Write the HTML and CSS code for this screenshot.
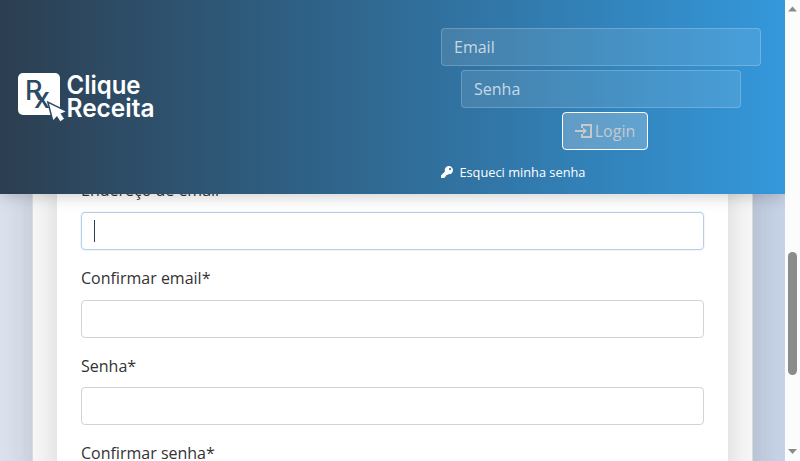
FILE: index.html
```html
<!DOCTYPE html>
<html lang="pt-BR">
<head>
<meta charset="utf-8">
<title>Clique Receita</title>
<link rel="stylesheet" href="styles.css">
</head>
<body>
<div class="app">
  <div class="page">
    <header class="header">
      <a class="brand" aria-label="Clique Receita">
        <svg width="144" height="56" viewBox="0 0 144 56">
          <rect x="2" y="5" width="42" height="42" rx="5" fill="#fff"/>
          <g class="rx"><text x="9" y="32" font-size="27" textLength="17.5" lengthAdjust="spacingAndGlyphs">R</text><text x="18" y="40" font-size="29" textLength="16" lengthAdjust="spacingAndGlyphs">x</text></g>
          <path d="M33 35.5L37.3 52L41 48L44.3 53.2L48 50.8L44.5 45.5L49.5 43.5Z" fill="#fff" stroke="#2c4a63" stroke-width="3" paint-order="stroke"/>
          <g class="name"><text x="50.5" y="26" textLength="74" lengthAdjust="spacingAndGlyphs">Clique</text><text x="50.5" y="48.5" textLength="88" lengthAdjust="spacingAndGlyphs">Receita</text></g>
        </svg>
      </a>
      <form class="login">
        <input class="field email" placeholder="Email">
        <input class="field password" type="password" placeholder="Senha">
        <button class="submit" type="button">
          <svg width="18" height="16" viewBox="0 0 18 16" fill="none" stroke="currentColor" stroke-width="2"><path d="M7 5V2H16V14H7V11"/><path d="M0 8H10"/><path d="M8 4.5L12 8L8 11.5Z" fill="currentColor" stroke="none"/></svg><span>Login</span>
        </button>
        <a class="forgot">
          <svg width="12" height="12" viewBox="0 0 512 512" fill="currentColor"><path d="M512 176c0 97-79 176-176 176-11 0-22-1-33-3l-24 27c-5 5-11 8-18 8h-37v40c0 13-11 24-24 24h-40v40c0 13-11 24-24 24H24c-13 0-24-11-24-24v-78c0-6 3-12 7-17l162-161C163 214 160 195 160 176 160 79 239 0 336 0s176 79 176 176zM336 128a48 48 0 1 0 96 0 48 48 0 1 0-96 0z"/></svg><span>Esqueci minha senha</span>
        </a>
      </form>
    </header>
    <main class="outer">
      <section class="card">
        <div class="group"><label>Endereço de email*</label><div class="control focused"><span class="caret"></span></div></div>
        <div class="group"><label>Confirmar email*</label><div class="control"></div></div>
        <div class="group"><label>Senha*</label><div class="control"></div></div>
        <div class="group"><label>Confirmar senha*</label><div class="control"></div></div>
      </section>
    </main>
  </div>
  <div class="scrollbar">
    <svg width="10" height="6" viewBox="0 0 10 6"><path d="M0 5.5L4.5 0.5L9 5.5Z"/></svg>
    <div class="thumb"></div>
    <svg class="down" width="10" height="6" viewBox="0 0 10 6"><path d="M0 0H9L4.5 5Z"/></svg>
  </div>
</div>
</body>
</html>
```
FILE: styles.css
```css
* { box-sizing: border-box; }
body { margin: 0; overflow: hidden; font: 16px/25.5px "Open Sans", sans-serif; color: #333; }
.app { display: flex; width: 800px; height: 461px; overflow: hidden; }
.page { position: relative; width: 785px; height: 461px; overflow: hidden; background: linear-gradient(90deg, #dae1ed, #c6d2e5); }
.header { position: absolute; inset: 0 0 auto; z-index: 2; height: 194px; display: flex; justify-content: space-between; align-items: center; padding: 0 24px 0 16px; background: linear-gradient(90deg, #2c3e50, #3498db); box-shadow: 0 2px 15px rgba(0, 0, 0, .2); }
.brand { display: block; height: 56px; margin-top: -2px; }
.brand svg { display: block; }
.rx { font-family: Inter, sans-serif; font-weight: 500; fill: #2c4a63; }
.name { font: 600 25px Inter, sans-serif; fill: #fff; }
.login { width: 320px; height: 194px; padding-top: 28px; display: flex; flex-direction: column; align-items: center; gap: 4px; }
.field { width: 320px; height: 38px; padding: 0 12px; border: 1px solid rgba(255, 255, 255, .2); border-radius: 4px; background: rgba(255, 255, 255, .1); font: inherit; color: #fff; outline: 0; }
.field::placeholder { color: rgba(255, 255, 255, .7); opacity: 1; }
.password { width: 280px; }
.submit { width: 86px; height: 38px; margin-left: 8px; padding: 1px 0 0; border: 1px solid #fff; border-radius: 4px; background: rgba(255, 255, 255, .23); color: #c5c9cd; font: inherit; display: flex; align-items: center; justify-content: center; gap: 2px; }
.submit svg { margin-top: -1px; }
.forgot { align-self: flex-start; margin-top: 8px; line-height: 20px; font-size: 12.8px; color: #fff; display: flex; align-items: center; gap: 6.4px; }
.outer { width: 721px; height: 700px; margin-left: 32px; padding: 0 24px; border: solid #dadcdc; border-width: 0 1px; background: #f8f8f8; box-shadow: 0 0 30px rgba(0, 0, 0, .15); }
.card { height: 700px; padding: 177.5px 24px 0; background: #fff; box-shadow: 0 0 30px rgba(0, 0, 0, .15); clip-path: inset(0 -24px); }
.group { margin-bottom: 16px; }
.group label { display: block; margin-bottom: 8px; }
.group:first-child label { margin-bottom: 9px; }
.control { height: 38px; padding: 7px 12px; border: 1px solid #ced4da; border-radius: 4px; background: #fff; }
.focused { border-color: #b8cee4; box-shadow: 0 0 0 1px rgba(52, 152, 219, .08); }
.caret { display: block; width: 1px; height: 22px; background: #2c3e50; }
.scrollbar { width: 15px; height: 461px; padding: 6px 2px 6px 3px; background: #fcfcfc; display: flex; flex-direction: column; fill: #8b8b8b; }
.scrollbar svg { display: block; flex: none; }
.thumb { width: 9px; height: 123px; margin-top: 240px; border-radius: 5px; background: #8b8b8b; }
.down { margin-top: auto; }
```
